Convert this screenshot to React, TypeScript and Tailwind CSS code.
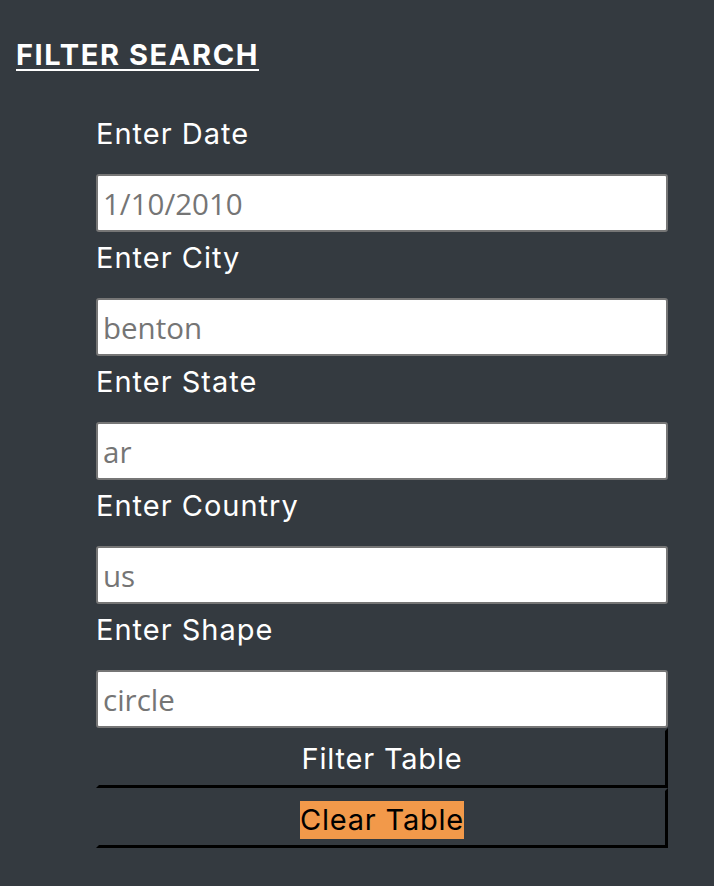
import React from "react";

const fields = [
  { label: "Enter Date", ph: "1/10/2010" },
  { label: "Enter City", ph: "benton" },
  { label: "Enter State", ph: "ar" },
  { label: "Enter Country", ph: "us" },
  { label: "Enter Shape", ph: "circle" },
];

export default function App() {
  return (
    <div
      className="w-full min-h-[886px] bg-[#343a40] text-white"
      style={{ fontFamily: "Inter, 'Liberation Sans', sans-serif" }}
    >
      <div className="pt-[38px] pl-[16px] text-[29px] leading-[33px] font-bold tracking-[1.6px] underline decoration-2 underline-offset-[4px]">
        FILTER SEARCH
      </div>
      <form className="ml-[96px] w-[572px] mt-[37px] flex flex-col" onSubmit={(e) => e.preventDefault()}>
        {fields.map((f) => (
          <div key={f.label} className="flex flex-col">
            <label className="h-[66px] pt-[9px] text-[29px] leading-[33px] tracking-[1px] text-white">{f.label}</label>
            <input
              type="text"
              placeholder={f.ph}
              className="h-[58px] w-full rounded-[3px] border-2 border-[#767676] bg-white pl-[5px] text-[29.5px] text-[#757575] placeholder:text-[#757575] outline-none"
              style={{ fontFamily: "'Open Sans', 'Liberation Sans', Arial, sans-serif" }}
            />
          </div>
        ))}
        <button
          type="button"
          className="h-[60px] w-full border-[3px] border-t-[#343a40] border-l-[#343a40] border-r-black border-b-black bg-[#343a40] text-[29px] leading-[33px] tracking-[0.8px] text-white"
        >
          Filter Table
        </button>
        <button
          type="button"
          className="h-[60px] w-full border-[3px] border-t-[#343a40] border-l-[#343a40] border-r-black border-b-black bg-[#343a40] text-[29px] tracking-[0.8px] text-black"
        >
          <span className="inline-block h-[38px] leading-[38px] bg-[#f2994a] align-middle">Clear Table</span>
        </button>
      </form>
    </div>
  );
}
